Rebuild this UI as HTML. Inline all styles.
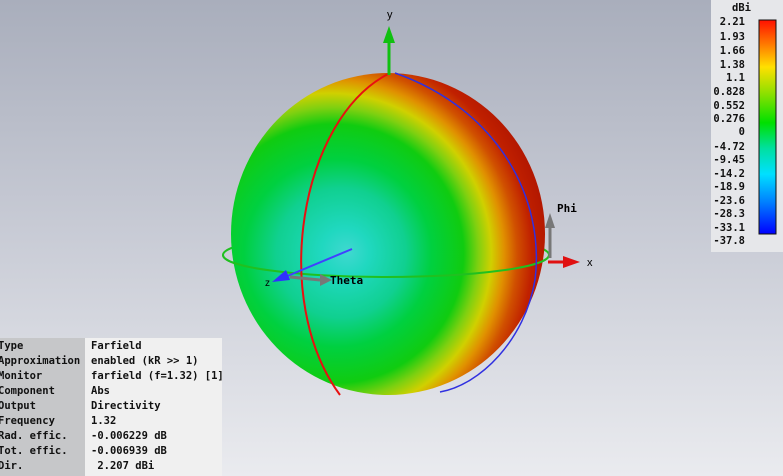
<!DOCTYPE html><html><head><style>
body{margin:0;width:783px;height:476px;overflow:hidden;background:linear-gradient(#a9aebc,#c9ccd6 50%,#eaebef);font-family:"DejaVu Sans Mono","Liberation Mono",monospace;}
#cb{position:absolute;left:711px;top:0;width:72px;height:252px;background:#e6e7ea;}
.t{position:absolute;font-size:10.5px;font-weight:bold;color:#111;}
#tab{position:absolute;left:0;top:338px;width:222px;height:138px;background:#f0f0f0;}
#tab .l{position:absolute;left:0;top:0;width:85px;height:138px;background:#c6c7c9;}
.r{position:absolute;font-size:10.5px;font-weight:bold;color:#111;white-space:pre;}
</style></head><body>
<svg width="783" height="476" style="position:absolute;left:0;top:0">
<defs>
<radialGradient id="g" gradientUnits="userSpaceOnUse" cx="322" cy="255" r="240" fx="348" fy="252">
<stop offset="0" stop-color="#40d8d0"/><stop offset="0.1" stop-color="#20d8c0"/>
<stop offset="0.27" stop-color="#10d090"/><stop offset="0.39" stop-color="#00d040"/>
<stop offset="0.54" stop-color="#10cc10"/><stop offset="0.61" stop-color="#80d010"/>
<stop offset="0.67" stop-color="#d0d000"/><stop offset="0.73" stop-color="#e09000"/>
<stop offset="0.79" stop-color="#d05000"/><stop offset="0.86" stop-color="#c02000"/>
<stop offset="1" stop-color="#a81000"/></radialGradient>
<linearGradient id="cbg" x1="0" y1="0" x2="0" y2="1">
<stop offset="0" stop-color="#ff1000"/><stop offset="0.12" stop-color="#ff8000"/><stop offset="0.22" stop-color="#ffe000"/>
<stop offset="0.34" stop-color="#90e000"/><stop offset="0.48" stop-color="#00e000"/><stop offset="0.6" stop-color="#00e0a0"/>
<stop offset="0.72" stop-color="#00e0ff"/><stop offset="0.85" stop-color="#0080ff"/><stop offset="1" stop-color="#0000ff"/></linearGradient>
</defs>
<ellipse cx="386" cy="255" rx="163" ry="22" fill="none" stroke="#20c020" stroke-width="2"/>
<ellipse cx="388" cy="234" rx="157" ry="161" fill="url(#g)"/>
<path d="M223,255 A163,22 0 0 0 549,255" fill="none" stroke="#20c020" stroke-width="2"/>
<path d="M388,74 C300,120 270,300 340,395" fill="none" stroke="#e81010" stroke-width="2"/>
<path d="M395,73 C500,110 545,200 535,280 C525,340 480,385 440,392" fill="none" stroke="#3030e0" stroke-width="1.5"/>
<line x1="389" y1="75" x2="389" y2="42" stroke="#10c010" stroke-width="3"/>
<polygon points="383,43 395,43 389,26" fill="#10c010"/>
<text x="387" y="18" font-size="11" font-family="Liberation Sans">y</text>
<line x1="548" y1="262" x2="565" y2="262" stroke="#e01010" stroke-width="3"/>
<polygon points="563,256 563,268 580,262" fill="#e01010"/>
<text x="587" y="266" font-size="11" font-family="Liberation Sans">x</text>
<line x1="550" y1="258" x2="550" y2="228" stroke="#777" stroke-width="3"/>
<polygon points="545,228 555,228 550,213" fill="#777"/>
<text x="557" y="212" font-size="11" font-weight="bold" font-family="DejaVu Sans Mono">Phi</text>
<line x1="352" y1="249" x2="285" y2="277" stroke="#4040ff" stroke-width="2"/>
<polygon points="272,282 286,270 290,280" fill="#3030ff"/>
<line x1="290" y1="277" x2="320" y2="280" stroke="#777" stroke-width="3"/>
<polygon points="320,274 320,286 332,280" fill="#777"/>
<text x="330" y="284" font-size="11" font-weight="bold" font-family="DejaVu Sans Mono">Theta</text>
<text x="265" y="286" font-size="10" font-family="Liberation Sans">z</text>
</svg>
<div id="cb">
<div class="t" style="left:21px;top:2px">dBi</div>
<svg width="72" height="240" style="position:absolute;left:0;top:0"><rect x="48" y="20" width="17" height="214" fill="url(#cbg)" stroke="#111"/></svg>
<div class="t" style="right:38px;top:16px">2.21</div>
<div class="t" style="right:38px;top:31px">1.93</div>
<div class="t" style="right:38px;top:45px">1.66</div>
<div class="t" style="right:38px;top:59px">1.38</div>
<div class="t" style="right:38px;top:72px">1.1</div>
<div class="t" style="right:38px;top:86px">0.828</div>
<div class="t" style="right:38px;top:100px">0.552</div>
<div class="t" style="right:38px;top:113px">0.276</div>
<div class="t" style="right:38px;top:126px">0</div>
<div class="t" style="right:38px;top:141px">-4.72</div>
<div class="t" style="right:38px;top:154px">-9.45</div>
<div class="t" style="right:38px;top:168px">-14.2</div>
<div class="t" style="right:38px;top:181px">-18.9</div>
<div class="t" style="right:38px;top:195px">-23.6</div>
<div class="t" style="right:38px;top:208px">-28.3</div>
<div class="t" style="right:38px;top:222px">-33.1</div>
<div class="t" style="right:38px;top:235px">-37.8</div>
</div>
<div id="tab"><div class="l"></div>
<div class="r" style="left:-2px;top:2px">Type</div><div class="r" style="left:91px;top:2px">Farfield</div>
<div class="r" style="left:-2px;top:17px">Approximation</div><div class="r" style="left:91px;top:17px">enabled (kR &gt;&gt; 1)</div>
<div class="r" style="left:-2px;top:32px">Monitor</div><div class="r" style="left:91px;top:32px">farfield (f=1.32) [1]</div>
<div class="r" style="left:-2px;top:47px">Component</div><div class="r" style="left:91px;top:47px">Abs</div>
<div class="r" style="left:-2px;top:62px">Output</div><div class="r" style="left:91px;top:62px">Directivity</div>
<div class="r" style="left:-2px;top:77px">Frequency</div><div class="r" style="left:91px;top:77px">1.32</div>
<div class="r" style="left:-2px;top:92px">Rad. effic.</div><div class="r" style="left:91px;top:92px">-0.006229 dB</div>
<div class="r" style="left:-2px;top:107px">Tot. effic.</div><div class="r" style="left:91px;top:107px">-0.006939 dB</div>
<div class="r" style="left:-2px;top:122px">Dir.</div><div class="r" style="left:91px;top:122px"> 2.207 dBi</div>
</div>
</body></html>
